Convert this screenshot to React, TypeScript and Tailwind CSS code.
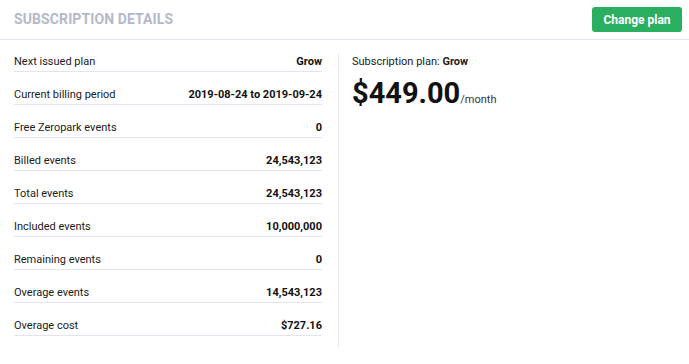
const rows = [
  { label: "Next issued plan", value: "Grow" },
  { label: "Current billing period", value: "2019-08-24 to 2019-09-24" },
  { label: "Free Zeropark events", value: "0" },
  { label: "Billed events", value: "24,543,123" },
  { label: "Total events", value: "24,543,123" },
  { label: "Included events", value: "10,000,000" },
  { label: "Remaining events", value: "0" },
  { label: "Overage events", value: "14,543,123" },
  { label: "Overage cost", value: "$727.16" },
];

export default function App() {
  return (
    <div className="w-[689px] h-[364px] bg-white font-['Roboto',sans-serif] text-[#1b1b1b]">
      <div className="h-[40px] flex items-center justify-between pl-[14px] pr-[7px] border-b border-[#e4e4ee]">
        <h2 className="text-[14px] font-bold uppercase text-[#b4b9c8] tracking-[0.1px]">
          Subscription details
        </h2>
        <button className="h-[25px] w-[90px] rounded-[3px] bg-[#2aae60] text-white text-[12px] font-bold">
          Change plan
        </button>
      </div>

      <div className="flex">
        <div className="w-[308px] ml-[14px] -mt-[1px]">
          {rows.map((row) => (
            <div
              key={row.label}
              className="h-[33px] flex items-end justify-between pb-[2px] border-b border-[#e1e5ef] text-[11px] leading-[14px]"
            >
              <span>{row.label}</span>
              <span className="font-bold text-[#111]">{row.value}</span>
            </div>
          ))}
        </div>

        <div className="ml-[16px] mt-[13px] h-[295px] border-l border-[#e8e8ee]" />

        <div className="pl-[13px] pt-[15px]">
          <p className="text-[11px] leading-[14px]">
            Subscription plan: <span className="font-bold">Grow</span>
          </p>
          <p className="mt-[9px] leading-[30px]">
            <span className="text-[29px] font-bold text-[#111]">$449.00</span>
            <span className="text-[11px] text-[#333]">/month</span>
          </p>
        </div>
      </div>
    </div>
  );
}
